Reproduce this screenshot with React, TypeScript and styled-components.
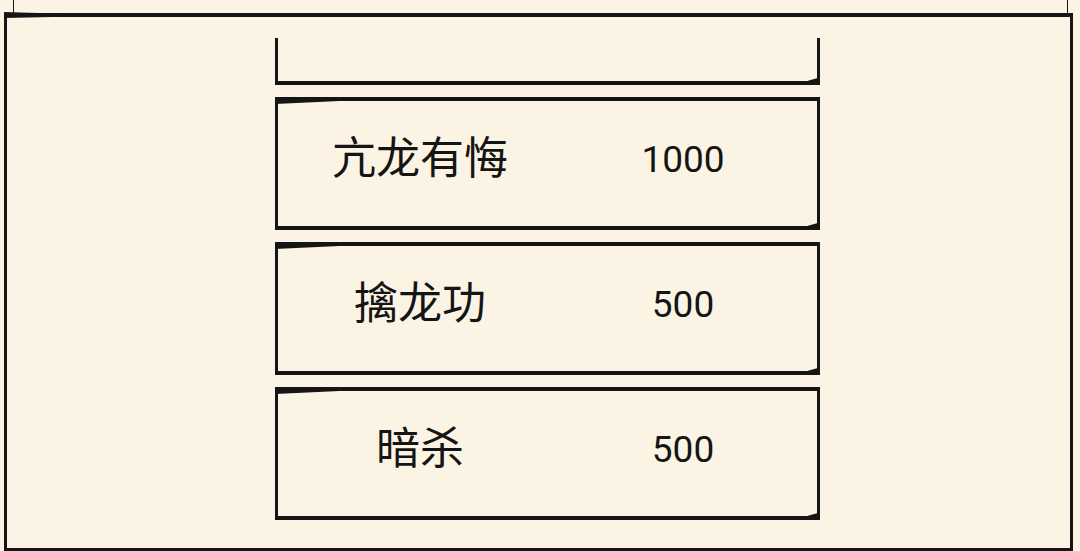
import React, { useLayoutEffect, useRef } from 'react';
import styled, { createGlobalStyle } from 'styled-components';

const INK = '#151515';
const PAPER = '#fbf4e4';

type Skill = {
  name: string;
  cost: number;
};

const skills: Skill[] = [
  { name: '飞龙在天', cost: 800 },
  { name: '亢龙有悔', cost: 1000 },
  { name: '擒龙功', cost: 500 },
  { name: '暗杀', cost: 500 },
];

const GlobalStyle = createGlobalStyle`
  *, *:before, *:after {
    box-sizing: border-box;
  }

  html, body {
    margin: 0;
    padding: 0;
    background: ${PAPER};
  }

  body {
    width: 1080px;
    height: 551px;
    overflow: hidden;
    font-family: Roboto, "Noto Sans CJK SC", sans-serif;
    color: ${INK};
  }
`;

const Screen = styled.div`
  width: 1080px;
  height: 551px;
  display: flex;
  flex-direction: column;
  overflow: hidden;
  background: ${PAPER};
`;

// bottom edge of the panel above, mostly scrolled off
const HeaderStub = styled.div`
  flex: none;
  height: 13px;
  margin: 0 12px 0 13px;
  border-left: 1.5px solid ${INK};
  border-right: 1.5px solid ${INK};
`;

const Panel = styled.div`
  flex: 1;
  min-height: 0;
  margin: 0 7px 0 4px;
  border: solid ${INK};
  border-width: 4px 3px 3px 3px;
  padding: 21px 0 0 268px;
  position: relative;

  &:before {
    content: '';
    position: absolute;
    top: -5px;
    left: -3px;
    width: 60px;
    height: 6px;
    background: ${INK};
    clip-path: polygon(0 0, 100% 30%, 100% 80%, 0 100%);
  }
`;

const SkillList = styled.div`
  width: 545px;
  height: 482px;
  overflow: hidden;
  display: flex;
  flex-direction: column;
  gap: 12px;
`;

const SkillCard = styled.div`
  flex: none;
  height: 133px;
  border: solid ${INK};
  border-width: 4px 3px 4px 3px;
  display: grid;
  grid-template-columns: 284px 242px 1fr;
  align-items: center;
  position: relative;

  /* ink blot where the pen starts the top stroke */
  &:before {
    content: '';
    position: absolute;
    top: -4px;
    left: -3px;
    width: 70px;
    height: 7px;
    background: ${INK};
    clip-path: polygon(0 0, 100% 0, 100% 55%, 0 100%);
  }

  /* flick at the end of the bottom stroke */
  &:after {
    content: '';
    position: absolute;
    right: -5px;
    bottom: -4px;
    width: 14px;
    height: 7px;
    background: ${INK};
    clip-path: polygon(0 40%, 70% 0, 100% 60%, 100% 100%, 0 100%);
  }
`;

const SkillName = styled.span`
  text-align: center;
  font-family: "Noto Sans CJK SC", "Noto Sans", sans-serif;
  font-size: 44px;
  line-height: 1;
  margin-top: -17px;
`;

const SkillCost = styled.span`
  text-align: center;
  font-family: Roboto, "Liberation Sans", sans-serif;
  font-size: 37px;
  line-height: 1;
  margin-top: -9px;
`;

const App: React.FC = () => {
  const listRef = useRef<HTMLDivElement>(null);

  useLayoutEffect(() => {
    if (listRef.current) listRef.current.scrollTop = 86;
  }, []);

  return (
    <Screen>
      <GlobalStyle />
      <HeaderStub />
      <Panel>
        <SkillList ref={listRef}>
          {skills.map((skill) => (
            <SkillCard key={skill.name}>
              <SkillName>{skill.name}</SkillName>
              <SkillCost>{skill.cost}</SkillCost>
            </SkillCard>
          ))}
        </SkillList>
      </Panel>
    </Screen>
  );
};

export default App;
